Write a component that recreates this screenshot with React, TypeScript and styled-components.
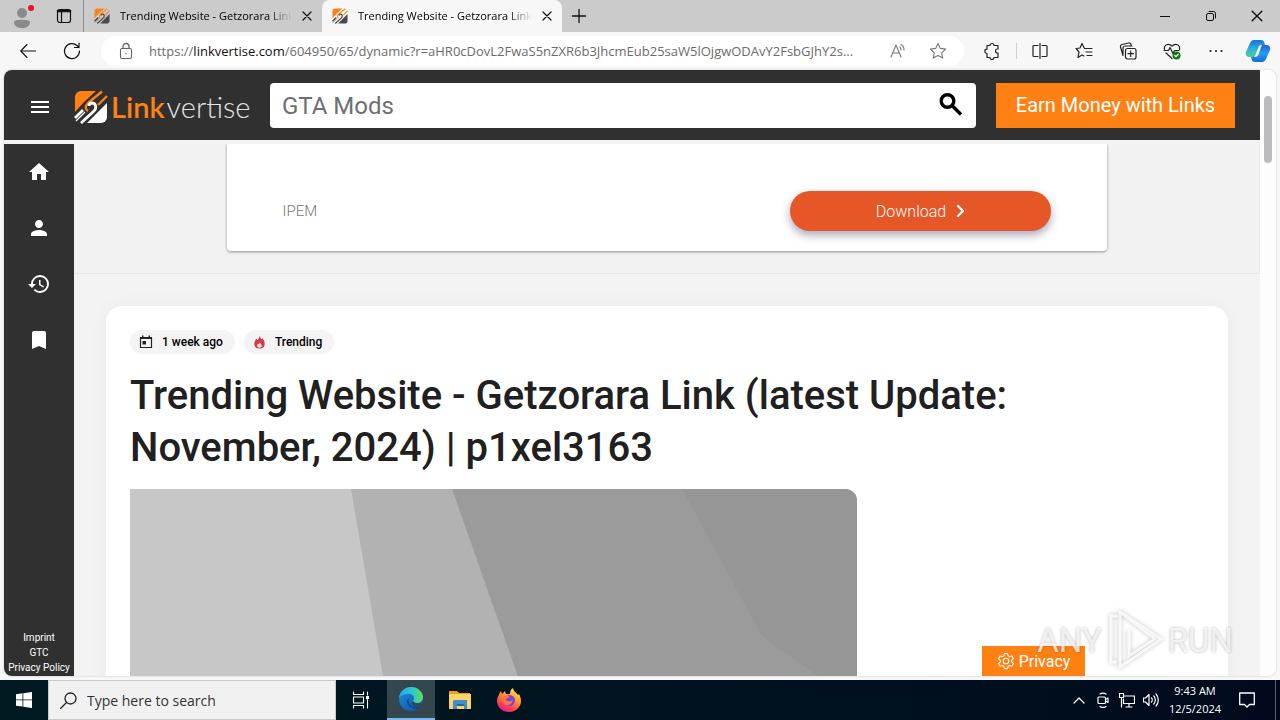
import React from "react";
import styled, { createGlobalStyle } from "styled-components";
import { MdMenu, MdHome, MdPerson, MdHistory, MdBookmark } from "react-icons/md";

const GlobalStyle = createGlobalStyle`
  *, *::before, *::after { box-sizing: border-box; }
  body { margin: 0; background: #f7f7f7; font-family: "Open Sans", "Noto Sans", sans-serif; color: #1b1b1b; }
  button, input { font: inherit; color: inherit; }
  button { display: flex; align-items: center; justify-content: center; padding: 0; border: 0; background: none; cursor: pointer; }
  svg { display: block; flex: none; }
  a { color: inherit; text-decoration: none; }
`;

const Desktop = styled.div`
  display: flex;
  flex-direction: column;
  height: 100vh;
  overflow: hidden;
`;

/* ---------- browser window ---------- */

const TabStrip = styled.div`
  display: flex;
  height: 32px;
  flex: none;
  background: #cbcbcb;
`;

const StripButton = styled.button<{ $width: number }>`
  width: ${(p) => p.$width}px;
  height: 32px;
`;

const Tab = styled.div<{ $active?: boolean }>`
  display: flex;
  align-items: center;
  gap: 10px;
  width: ${(p) => (p.$active ? 240 : 239)}px;
  padding: 0 10px;
  border-left: ${(p) => (p.$active ? "0" : "1px solid #8f8f8f")};
  border-radius: ${(p) => (p.$active ? "8px 8px 0 0" : "0")};
  background: ${(p) => (p.$active ? "#f7f7f7" : "transparent")};
`;

const TabTitle = styled.span`
  flex: 1;
  min-width: 0;
  overflow: hidden;
  white-space: nowrap;
  font-size: 11px;
  line-height: 20px;
  color: #000;
  mask-image: linear-gradient(90deg, #000 calc(100% - 24px), transparent);
`;

const WindowControls = styled.div`
  display: flex;
  margin-left: auto;
`;

const Toolbar = styled.div`
  display: flex;
  align-items: center;
  height: 38px;
  flex: none;
  padding: 0 2px 0 6px;
  background: #f7f7f7;
`;

const ToolButton = styled.button`
  width: 44px;
  height: 32px;
  flex: none;
`;

const CopilotButton = styled(ToolButton)`
  width: 40px;
`;

const AddressBar = styled.form`
  display: flex;
  align-items: center;
  flex: 1;
  min-width: 0;
  height: 30px;
  margin: 0 6px 0 7px;
  padding: 0 6px 0 16px;
  border-radius: 15px;
  background: #fff;
`;

const Address = styled.span`
  flex: 1;
  min-width: 0;
  margin-left: 14px;
  overflow: hidden;
  white-space: nowrap;
  text-overflow: ellipsis;
  font-size: 13px;
  line-height: 20px;
  color: #6b6b6b;
  b { font-weight: 400; color: #111; }
`;

const AddressButton = styled.button`
  width: 40px;
  height: 28px;
  flex: none;
`;

const Rule = styled.span`
  width: 1px;
  height: 16px;
  margin: 0 1px 0 2px;
  background: #cfcfcf;
`;

const Viewport = styled.div`
  position: relative;
  display: flex;
  flex: 1;
  min-height: 0;
  margin: 0 4px 4px;
  overflow: hidden;
  border-radius: 8px;
  background: #fff;
  box-shadow: 0 0 2px #bbb;
`;

const ScrollTrack = styled.div`
  width: 16px;
  flex: none;
  padding: 26px 4px;
  background: #fdfdfd;
`;

const ScrollThumb = styled.div`
  height: 67px;
  border-radius: 4px;
  background: #bbbbc0;
`;

/* ---------- web page ---------- */

const Page = styled.div`
  display: flex;
  flex-direction: column;
  flex: 1;
  min-width: 0;
  font-family: Roboto, sans-serif;
  background: #f3f3f3;
`;

const Header = styled.header`
  display: flex;
  align-items: center;
  height: 70px;
  flex: none;
  margin-bottom: 4px;
  padding: 0 25px 0 24px;
  background: #303030;
  color: #fff;
`;

const MenuButton = styled.button`
  padding-top: 4px;
`;

const Logo = styled.a`
  display: flex;
  align-items: center;
  width: 176px;
  margin: 4px 20px 0 22px;
  font-family: Lato, sans-serif;
  font-size: 29px;
  line-height: 32px;
  font-weight: 300;
  color: #e4e4e4;
  svg { margin-right: 3px; }
  b { margin-right: 2px; font-weight: 600; color: #ff8114; }
`;

const SearchForm = styled.form`
  display: flex;
  flex: 1;
  min-width: 0;
  height: 45px;
  margin-right: 20px;
  padding: 0 12px;
  border-radius: 4px;
  background: #fff;
  color: #000;
`;

const SearchInput = styled.input`
  flex: 1;
  min-width: 0;
  padding: 2px 0 0;
  border: 0;
  outline: 0;
  background: none;
  font-size: 24px;
  &::placeholder { color: #6c7074; opacity: 1; }
`;

const EarnButton = styled.button`
  width: 239px;
  height: 45px;
  background: #ff8114;
  color: #fff;
  font-size: 20px;
`;

const Body = styled.div`
  display: flex;
  flex: 1;
  min-height: 0;
`;

const Sidebar = styled.nav`
  display: flex;
  flex-direction: column;
  width: 70px;
  flex: none;
  background: #303030;
  color: #fff;
`;

const SideLink = styled.a`
  display: flex;
  align-items: center;
  justify-content: center;
  height: 56px;
`;

const LegalLinks = styled.div`
  display: flex;
  flex-direction: column;
  margin-top: auto;
  padding-bottom: 1px;
  text-align: center;
  font-size: 10px;
  line-height: 15px;
  white-space: nowrap;
`;

const Main = styled.main`
  flex: 1;
  min-width: 0;
  overflow: hidden;
`;

const AdSlot = styled.section`
  display: flex;
  justify-content: center;
  padding: 0 32px 22px;
  border: 1px solid #e8e8e8;
  border-width: 0 1px 1px 0;
  background: #f2f2f2;
`;

const AdCard = styled.div`
  display: flex;
  align-items: flex-end;
  justify-content: space-between;
  width: 880px;
  height: 107px;
  padding: 0 56px 20px;
  border-radius: 0 0 4px 4px;
  background: #fff;
  box-shadow: 0 1px 3px rgba(0, 0, 0, 0.4);
`;

const Advertiser = styled.span`
  font-size: 15px;
  line-height: 40px;
  font-weight: 300;
  color: #777;
`;

const DownloadButton = styled.button`
  gap: 8px;
  width: 261px;
  height: 40px;
  padding-left: 4px;
  border-radius: 20px;
  background: #e65728;
  color: #fff;
  font-size: 16px;
  font-weight: 300;
  box-shadow: 0 4px 10px rgba(0, 0, 50, 0.35);
`;

const Article = styled.article`
  margin: 32px;
  padding: 24px;
  border-radius: 16px;
  background: #fff;
  box-shadow: 0 0 20px rgba(0, 0, 0, 0.04);
`;

const Chips = styled.div`
  display: flex;
  gap: 9px;
`;

const Chip = styled.span`
  display: flex;
  align-items: center;
  gap: 8px;
  height: 24px;
  padding: 0 12px 0 8px;
  border-radius: 12px;
  background: #f4f4f4;
  font-size: 12px;
  font-weight: 500;
  color: #000;
`;

const Title = styled.h1`
  margin: 16px 0 15px;
  font-size: 40px;
  line-height: 52px;
  font-weight: 500;
  color: #202020;
`;

const Cover = styled.div`
  margin-right: 347px;
  overflow: hidden;
  border-radius: 0 12px 0 0;
  svg { width: 100%; height: auto; }
`;

const PrivacyButton = styled.button`
  position: absolute;
  right: 191px;
  bottom: 0;
  gap: 4px;
  width: 103px;
  height: 30px;
  background: #ff8114;
  color: #fff;
  font-family: Roboto, sans-serif;
  font-size: 16px;
`;

const Watermark = styled.div`
  position: absolute;
  right: 43px;
  bottom: 4px;
  display: flex;
  align-items: center;
  gap: 4px;
  height: 64px;
  font-family: Roboto, sans-serif;
  font-size: 33px;
  color: rgba(255, 255, 255, 0.75);
  text-shadow: 0 0 3px rgba(0, 0, 0, 0.3);
  pointer-events: none;
  svg { filter: drop-shadow(0 0 2px rgba(0, 0, 0, 0.3)); }
`;

/* ---------- taskbar ---------- */

const Taskbar = styled.div`
  display: flex;
  height: 40px;
  flex: none;
  background: linear-gradient(90deg, #001a21, #00121f 55%, #000a1c);
  color: #fff;
`;

const TaskButton = styled.button<{ $active?: boolean }>`
  width: ${(p) => (p.$active ? 48 : 49)}px;
  border-bottom: ${(p) => (p.$active ? "2px solid #76b9ed" : "0")};
  background: ${(p) => (p.$active ? "#34474f" : "transparent")};
`;

const StartButton = styled(TaskButton)`
  width: 48px;
`;

const PinnedApps = styled.div`
  display: flex;
  margin-left: 2px;
`;

const TaskSearch = styled.label`
  display: flex;
  align-items: center;
  gap: 10px;
  width: 288px;
  padding: 0 11px;
  border: 1px solid #c8c8c8;
  background: #f1f1f1;
  color: #222;
`;

const TaskSearchInput = styled.input`
  flex: 1;
  min-width: 0;
  padding: 0;
  border: 0;
  outline: 0;
  background: none;
  font-size: 14px;
  &::placeholder { color: #333; opacity: 1; }
`;

const Tray = styled.div`
  display: flex;
  margin-left: auto;
`;

const TrayButton = styled.button<{ $wide?: boolean }>`
  width: ${(p) => (p.$wide ? 40 : 24)}px;
`;

const Clock = styled.time`
  width: 64px;
  padding-top: 2px;
  text-align: center;
  font-size: 11px;
  line-height: 18px;
  white-space: nowrap;
`;

const ShowDesktop = styled.button`
  width: 5px;
  margin-left: 8px;
  border-left: 1px solid #59616a;
`;

/* ---------- icons ---------- */

type LineProps = { size?: number; box?: number; color?: string; width?: number; children: React.ReactNode };

const Line = ({ size = 16, box = 16, color = "#222", width = 1, children }: LineProps) => (
  <svg width={size} height={size} viewBox={`0 0 ${box} ${box}`} fill="none" stroke={color} strokeWidth={width} strokeLinecap="round" strokeLinejoin="round" aria-hidden="true">
    {children}
  </svg>
);

const Emblem = ({ size, light }: { size: number; light: string }) => (
  <svg width={size} height={size} viewBox="0 0 34 34" aria-hidden="true">
    <path d="M7 1h15L10 12 1 22V7a6 6 0 0 1 6-6z" fill="#ff8114" />
    <path d="M33 13v14a6 6 0 0 1-6 6H13l11-11z" fill={light} />
    <path d="M28 1.500 14 13c-3 3-3 6 0 8M33 6 24 15" fill="none" stroke="#ff8114" strokeWidth="2.400" />
    <path d="M1 28 9 20M7 33 20 21c3-3 2-8-2-8-2 0-3 1-3 3" fill="none" stroke={light} strokeWidth="2.800" />
    <path d="m2 31 9-9" fill="none" stroke={light} strokeWidth="1.200" />
  </svg>
);

const CloseIcon = ({ size = 10 }: { size?: number }) => (
  <Line size={size} box={10} color="#111" width={1.2}><path d="M1 1l8 8M9 1 1 9" /></Line>
);

const Avatar = () => (
  <svg width="24" height="28" viewBox="0 0 24 28" aria-hidden="true">
    <circle cx="12" cy="11" r="5" fill="#8a8a8a" />
    <path d="M4 20c0-3 16-3 16 0 0 8-16 8-16 0z" fill="#8a8a8a" />
    <circle cx="21" cy="6" r="3" fill="#e8112a" />
  </svg>
);

const Workspaces = () => (
  <Line size={16} color="#111" width={1.2}>
    <rect x="1.500" y="1.500" width="13" height="13" rx="2.500" />
    <path d="M2 3h12" strokeWidth="2.600" />
    <path d="M5.500 4v10" />
  </Line>
);

const CalendarIcon = () => (
  <svg width="16" height="16" viewBox="0 0 16 16" aria-hidden="true">
    <path d="M2.500 3.500h11v10h-11z" fill="none" stroke="#222" strokeWidth="1.200" />
    <path d="M2 3h12v2H2zM4 1.500h1.400V4H4zM10.600 1.500H12V4h-1.400zM4.500 7h3.500v3.500H4.500z" fill="#222" />
  </svg>
);

const CopilotIcon = () => (
  <svg width="26" height="26" viewBox="0 0 26 26" aria-hidden="true">
    <defs>
      <linearGradient id="cpA" x1="0" y1="0" x2="0" y2="1"><stop offset="0" stopColor="#1c6fe0" /><stop offset=".5" stopColor="#23b1e0" /><stop offset="1" stopColor="#55cf8d" /></linearGradient>
      <linearGradient id="cpB" x1="0" y1="0" x2="0" y2="1"><stop offset="0" stopColor="#2a5bd8" /><stop offset=".5" stopColor="#1ea0f2" /><stop offset="1" stopColor="#1668dc" /></linearGradient>
    </defs>
    <path d="M9 2h7c2 0 3 1 3.500 3l.5 2c-3 0-4 1-5 3l-2 6c-1 2-2 3-4 3H5c-3 0-5-2-4-5L5 5c1-2 2-3 4-3z" fill="url(#cpA)" />
    <path d="M17 24h-7c-2 0-3-1-3.500-3L6 19c3 0 4-1 5-3l2-6c1-2 2-3 4-3h4c3 0 5 2 4 5l-4 9c-1 2-2 3-4 3z" fill="url(#cpB)" />
    <path d="M14 8c1-1 2-1 3-1-1 2-2 5-3 8s-2 4-5 4c1-1 2-3 2-4z" fill="#f7f7f7" />
  </svg>
);

const Flame = () => (
  <svg width="15" height="16" viewBox="0 0 16 16" aria-hidden="true">
    <path d="M8 1c1 2 1 3 2 4l1-1c2 2 2.500 4 2.500 6 0 3-2.500 5-5.500 5s-5.500-2-5.500-5C2.500 7 4 6 4.500 4.500L6 6c1-1 2-3 2-5z" fill="#dc3545" />
    <path d="M8.500 8c0 2 2 2 2 4 0 1-1 2-2.500 2s-2.500-1-2.500-2c0-1 .5-2 1-2.500l.8.8C8 10 8.500 9 8.500 8z" fill="#f7e5e6" />
  </svg>
);

const EdgeIcon = () => (
  <svg width="26" height="26" viewBox="0 0 26 26" aria-hidden="true">
    <defs>
      <linearGradient id="edA" x1="0" y1=".4" x2="1" y2=".4"><stop offset="0" stopColor="#2aa8e4" /><stop offset=".55" stopColor="#2fc5cc" /><stop offset="1" stopColor="#5fdd5d" /></linearGradient>
      <linearGradient id="edB" x1="0" y1="0" x2="1" y2="1"><stop offset="0" stopColor="#1b8fdf" /><stop offset="1" stopColor="#114f9e" /></linearGradient>
    </defs>
    <circle cx="13" cy="13" r="12" fill="url(#edB)" />
    <path d="M1 12C2 5 7 1 13 1c7 0 12 5 12 10 0 4-3 6-6 6-2 0-4-1-4-2s1-1 1-3c0-2-2-4-5-4-5 0-9 2-10 4z" fill="url(#edA)" />
    <path d="M11 12c-2 6 3 10 9 9 1 0 2-.5 3-1-1 1-2 2-4 3-5 0-10-4-10-8 0-1 1-2 2-3z" fill="#0d4584" />
    <path d="M15.500 15.500c1 2 5 3 8 1l1 1-1.500 2.500c-3 1.500-8 1-9.500-3 0-1 1-1 2-1.500z" fill="#34474f" />
  </svg>
);

const ExplorerIcon = () => (
  <svg width="24" height="22" viewBox="0 0 24 22" aria-hidden="true">
    <path d="M1 2h8l2 2h11v5H1z" fill="#e8a021" />
    <path d="M1 5h22v15H1z" fill="#fbd667" />
    <path d="M6 11h13v9h-3v-5h-7v5H5v-8z" fill="#3d8fd1" />
    <path d="M9 15h7v2H9z" fill="#2469a8" />
  </svg>
);

const FirefoxIcon = () => (
  <svg width="24" height="26" viewBox="0 0 24 26" aria-hidden="true">
    <defs>
      <linearGradient id="ffA" x1=".8" y1="0" x2=".25" y2="1"><stop offset="0" stopColor="#fff04a" /><stop offset=".4" stopColor="#ff9b26" /><stop offset=".75" stopColor="#ff4054" /><stop offset="1" stopColor="#e31587" /></linearGradient>
    </defs>
    <path d="M2 8c0-1 1-3 2-4l1 3 3-3 1 3h4c0-3 1-5 3-6 0 3 4 5 5 7l1-1c1 2 2 4 2 7 0 6-5 11-12 11S0 20 0 14c0-3 1-5 2-6z" fill="url(#ffA)" />
    <circle cx="12.500" cy="13.500" r="5.500" fill="#7542e5" />
    <path d="M6 10c3-2 5-1 7 0-1 1-4 1-4 3 1 1 4 2 7 0-1 4-4 6-7 5-3-1-5-4-3-8z" fill="#ff7139" />
  </svg>
);

const title = "Trending Website - Getzorara Link (latest Update: November, 2024) | p1xel3163";

const BrowserTab = ({ active }: { active?: boolean }) => (
  <Tab $active={active}>
    <Emblem size={16} light="#4a4a4a" />
    <TabTitle>Trending Website - Getzorara Link</TabTitle>
    <button aria-label="Close tab"><CloseIcon /></button>
  </Tab>
);

export default function App() {
  return (
    <Desktop>
      <GlobalStyle />
      <TabStrip>
        <StripButton $width={44} aria-label="Profile"><Avatar /></StripButton>
        <StripButton $width={39} aria-label="Workspaces"><Workspaces /></StripButton>
        <BrowserTab />
        <BrowserTab active />
        <StripButton $width={34} aria-label="New tab">
          <Line size={14} box={14} color="#111" width={1.3}><path d="M7 .5v13M.5 7h13" /></Line>
        </StripButton>
        <WindowControls>
          <StripButton $width={46} aria-label="Minimize"><Line size={10} box={10} color="#111"><path d="M0 5.500h10" /></Line></StripButton>
          <StripButton $width={46} aria-label="Restore">
            <Line size={12} box={12} color="#111"><rect x="1.500" y="3.500" width="7" height="7" rx="1.500" /><path d="M4 1.500h4.500a2 2 0 0 1 2 2V8" /></Line>
          </StripButton>
          <StripButton $width={46} aria-label="Close"><CloseIcon size={12} /></StripButton>
        </WindowControls>
      </TabStrip>

      <Toolbar>
        <ToolButton aria-label="Back"><Line color="#111" width={1.1}><path d="M15.500 8H.7M7 1.500.7 8 7 14.500" /></Line></ToolButton>
        <ToolButton aria-label="Refresh"><Line size={18} box={18} color="#111" width={1.2}><path d="M16.500 9A7.500 7.500 0 1 1 14 3.500L16 5.500M16 1v4.500h-4.500" /></Line></ToolButton>
        <AddressBar onSubmit={(e) => e.preventDefault()}>
          <Line size={18} box={18} color="#666" width={1.1}><rect x="3.500" y="6.500" width="11" height="10" rx="1.500" /><path d="M6 6.500V4.500a3 3 0 0 1 6 0v2M9 11.500v.2" strokeWidth="1.300" /></Line>
          <Address>https://<b>linkvertise.com</b>/604950/65/dynamic?r=aHR0cDovL2FwaS5nZXR6b3JhcmEub25saW5lOjgwODAvY2FsbGJhY2s...</Address>
          <AddressButton type="button" aria-label="Read aloud">
            <Line size={18} box={18} color="#777" width={1.1}><path d="M2 15 7 3l5 12M4 11h6M11 5c1 1 1 2 1 3M12 2.500c2 1 3 3 3 5.500" /></Line>
          </AddressButton>
          <AddressButton type="button" aria-label="Add to favorites">
            <Line size={18} box={18} color="#777" width={1.1}><path d="m9 1.500 2.300 4.900 5.300.7-3.900 3.700 1 5.300L9 13.500l-4.700 2.600 1-5.300L1.400 7.100l5.300-.7z" /></Line>
          </AddressButton>
        </AddressBar>
        <ToolButton aria-label="Extensions">
          <Line size={18} box={18} width={1.2}><path d="M4 3.500h3a2 2 0 0 1 4 0h4V7h-.5a2 2 0 0 0 0 4h.5v4.500h-4a2 2 0 0 1-4 0H4v-4a2.200 2.200 0 1 1 0-4.400z" /></Line>
        </ToolButton>
        <Rule />
        <ToolButton aria-label="Split screen"><Line width={1.2}><path d="M6 2.500H2a1 1 0 0 0-1 1v9a1 1 0 0 0 1 1h4M8 0v16M10 2.500h4a1 1 0 0 1 1 1v9a1 1 0 0 1-1 1h-4" /></Line></ToolButton>
        <ToolButton aria-label="Favorites"><Line size={18} box={18} width={1.2}><path d="M17 6.500H9.500L7 1.500 5 6l-4 .5L4 10l-1 5.500L7 13l2 1M11 10h6M12 13.500h5" /></Line></ToolButton>
        <ToolButton aria-label="Collections"><Line size={18} box={18} width={1.2}><rect x="6.500" y="6.500" width="10.500" height="10.500" rx="2" /><path d="M11.700 9v5.500M9 11.700h5.500M4 13.500 1.500 5a2 2 0 0 1 1.500-2.500L9.500 1A2 2 0 0 1 12 2.500l.5 1.500M4 13V6a2 2 0 0 1 2-2h7" /></Line></ToolButton>
        <ToolButton aria-label="Browser essentials">
          <Line size={18} box={18} width={1.2}><path d="M1.500 7.500C.5 3 5.500.5 9 4c3.500-3.500 8.500-1 7.500 3.500M1 8.500h4.500L7 5.500l3 6 1.500-3H16M3 11l6 5.500" /><circle cx="13.500" cy="13.500" r="4" fill="#107c10" stroke="none" /><path d="m11.800 13.500 1.200 1.200 2.200-2.400" stroke="#fff" /></Line>
        </ToolButton>
        <ToolButton aria-label="Settings and more"><Line width={2.2}><path d="M2.500 8h.01M8 8h.01M13.500 8h.01" /></Line></ToolButton>
        <CopilotButton aria-label="Copilot"><CopilotIcon /></CopilotButton>
      </Toolbar>

      <Viewport>
        <Page>
          <Header>
            <MenuButton aria-label="Menu"><MdMenu size={24} /></MenuButton>
            <Logo href="#" aria-label="Linkvertise">
              <Emblem size={34} light="#fff" /><b>Link</b>vertise
            </Logo>
            <SearchForm onSubmit={(e) => e.preventDefault()}>
              <SearchInput aria-label="Search" placeholder="GTA Mods" />
              <button aria-label="Search">
                <svg width="26" height="26" viewBox="0 0 26 26" fill="none" stroke="#000" strokeWidth="3.400" aria-hidden="true"><circle cx="9.500" cy="9" r="6.300" /><path d="m14 13.500 9 9" /></svg>
              </button>
            </SearchForm>
            <EarnButton>Earn Money with Links</EarnButton>
          </Header>
          <Body>
            <Sidebar>
              <SideLink href="#" aria-label="Home"><MdHome size={24} /></SideLink>
              <SideLink href="#" aria-label="Profile"><MdPerson size={24} /></SideLink>
              <SideLink href="#" aria-label="History"><MdHistory size={24} /></SideLink>
              <SideLink href="#" aria-label="Bookmarks"><MdBookmark size={24} /></SideLink>
              <LegalLinks>
                <a href="#">Imprint</a>
                <a href="#">GTC</a>
                <a href="#">Privacy Policy</a>
              </LegalLinks>
            </Sidebar>
            <Main>
              <AdSlot>
                <AdCard>
                  <Advertiser>IPEM</Advertiser>
                  <DownloadButton>
                    Download
                    <Line size={14} box={14} color="#fff" width={2.4}><path d="m4 2 5 5-5 5" /></Line>
                  </DownloadButton>
                </AdCard>
              </AdSlot>
              <Article>
                <Chips>
                  <Chip><CalendarIcon />1 week ago</Chip>
                  <Chip><Flame />Trending</Chip>
                </Chips>
                <Title>{title}</Title>
                <Cover>
                  <svg viewBox="0 0 727 409" aria-hidden="true">
                    <rect width="727" height="409" fill="#b2b2b2" />
                    <path d="M0 0h221l70 409H0z" fill="#c7c7c7" />
                    <path d="M322 0h405v409H466z" fill="#9b9b9b" />
                    <path d="M552 0h175v214l-39-27-50-35c-6-5-9-9-12-16z" fill="#969696" />
                  </svg>
                </Cover>
              </Article>
            </Main>
          </Body>
        </Page>
        <ScrollTrack><ScrollThumb /></ScrollTrack>
        <PrivacyButton>
          <Line size={18} box={18} color="#fff" width={1.1}><path d="m7.500 1.500-.6 2.200-1.500.9-2.200-.7-1.600 2.700 1.700 1.600v1.700l-1.700 1.600 1.600 2.700 2.200-.7 1.500.9.6 2.200h3l.6-2.200 1.500-.9 2.200.7 1.600-2.700-1.700-1.600V8.200l1.700-1.600-1.600-2.700-2.200.7-1.500-.9-.6-2.200z" /><circle cx="9" cy="9" r="2.800" /></Line>
          Privacy
        </PrivacyButton>
        <Watermark>
          ANY
          <svg width="58" height="64" viewBox="0 0 58 64" fill="none" stroke="#fff" strokeOpacity=".8" strokeWidth="3" aria-hidden="true">
            <path d="M12 8H5v46h6M14 4v55l41-28zM14 4l35 27-26 17V22" />
          </svg>
          RUN
        </Watermark>
      </Viewport>

      <Taskbar>
        <StartButton aria-label="Start">
          <svg width="16" height="16" viewBox="0 0 16 16" fill="#fff" aria-hidden="true"><path d="M0 2.200 6.500 1.300v6.200H0zM7.300 1.200 16 0v7.500H7.300zM0 8.300h6.500v6.300L0 13.700zM7.300 8.300H16V16l-8.700-1.200z" /></svg>
        </StartButton>
        <TaskSearch>
          <Line size={17} box={17} width={1.3}><circle cx="10.500" cy="6.500" r="5.500" /><path d="m6.500 10.500-6 6" /></Line>
          <TaskSearchInput aria-label="Type here to search" placeholder="Type here to search" />
        </TaskSearch>
        <TaskButton aria-label="Task view">
          <Line size={18} box={18} color="#fff" width={1.1}><path d="M1.500 1v2.500h10V1M1.500 17v-2.500h10V17M1.500 6h10v6h-10zM15.500 1v3M15.500 8.500V17" /><path d="M14.500 5.500h2v2h-2z" fill="#fff" /></Line>
        </TaskButton>
        <PinnedApps>
          <TaskButton $active aria-label="Edge"><EdgeIcon /></TaskButton>
          <TaskButton aria-label="File Explorer"><ExplorerIcon /></TaskButton>
          <TaskButton aria-label="Firefox"><FirefoxIcon /></TaskButton>
        </PinnedApps>
        <Tray>
          <TrayButton aria-label="Show hidden icons"><Line size={12} box={12} color="#fff" width={1.3}><path d="m1 9 5-5 5 5" /></Line></TrayButton>
          <TrayButton aria-label="Meet now"><Line color="#fff" width={1.2}><rect x="3" y="5" width="7.500" height="6.500" rx="1" /><path d="m10.500 7.500 2.500-1.500v4.500l-2.500-1.500M5 2c2-1.300 4-1.300 6 0M5 14.500c2 1.300 4 1.300 6 0" /></Line></TrayButton>
          <TrayButton aria-label="Network"><Line color="#fff" width={1.2}><path d="M5 4h10.500v7.500h-11V7M10 11.500V15M7 15h6M.5 1.500h4v4h-4zM2.500 5.500V15" /></Line></TrayButton>
          <TrayButton aria-label="Volume"><Line color="#fff" width={1.2}><path d="M.5 6h2L6 2.500v11L2.500 10h-2zM8.500 6c1 1 1 3 0 4M10.800 4c2 2 2 6 0 8M13 2c3 3 3 9 0 12" /></Line></TrayButton>
          <Clock>9:43 AM<br />12/5/2024</Clock>
          <TrayButton $wide aria-label="Notifications"><Line color="#fff" width={1.3}><path d="M.7 1h14.600v11.500H10.500L8 15l-2.500-2.500H.7z" /></Line></TrayButton>
          <ShowDesktop aria-label="Show desktop" />
        </Tray>
      </Taskbar>
    </Desktop>
  );
}
